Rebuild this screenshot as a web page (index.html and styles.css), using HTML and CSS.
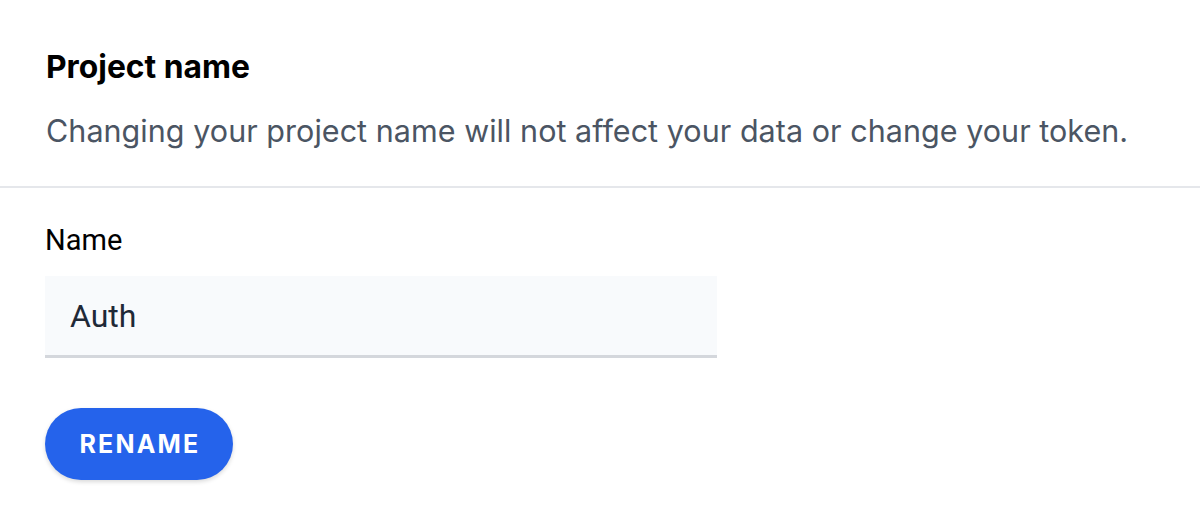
FILE: index.html
```html
<!DOCTYPE html>
<html>
<head>
<meta charset="utf-8">
<link rel="stylesheet" href="styles.css">
</head>
<body>
<div class="panel">
  <div class="head">
    <h2 class="title">Project name</h2>
    <p class="desc">Changing your project name will not affect your data or change your token.</p>
  </div>
  <div class="body">
    <label class="label" for="pname">Name</label>
    <div class="field"><input id="pname" class="input" type="text" value="Auth"></div>
    <button class="btn">RENAME</button>
  </div>
</div>
</body>
</html>
```
FILE: styles.css
```css
html, body { margin: 0; padding: 0; background: #fff; }
body { font-family: Inter, "Noto Sans", sans-serif; width: 1200px; height: 520px; overflow: hidden; }
.panel { display: flex; flex-direction: column; }
.head { padding: 47px 46px 35px; border-bottom: 2px solid #e5e7eb; }
.title { margin: 0; font-size: 31.8px; line-height: 40px; font-weight: 700; color: #000; }
.desc { margin: 24px 0 0; font-size: 30.5px; line-height: 40px; color: #4b5563; letter-spacing: 0.04px; }
.body { padding: 34px 45px; display: flex; flex-direction: column; align-items: flex-start; }
.label { font-family: Roboto, sans-serif; font-size: 29px; line-height: 36px; color: #000; }
.field { margin-top: 18px; width: 672px; }
.input { box-sizing: border-box; width: 100%; height: 82px; border: 0; border-bottom: 3px solid #d4d7dc; background: #f8fafc; padding: 0 25px; font-family: Roboto, sans-serif; font-size: 32px; color: #1f2937; outline: none; }
.btn { margin-top: 50px; width: 188px; height: 72px; border: 0; border-radius: 36px; background: #2563eb; color: #fff; font-family: Inter, sans-serif; font-weight: 700; font-size: 25px; letter-spacing: 2.2px; padding: 0 0 0 2px; box-shadow: 0 2px 4px rgba(0,0,0,0.15); }
```
